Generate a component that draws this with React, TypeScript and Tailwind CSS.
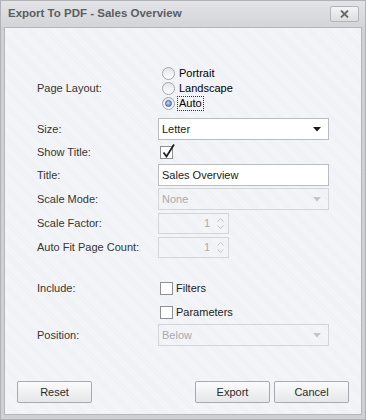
import React, { useState } from "react";

const font = "font-['Liberation_Sans',Arial,sans-serif]";

const Radio = ({ checked, label, focused }: { checked?: boolean; label: string; focused?: boolean }) => (
  <div className="flex items-center h-[15px]">
    <span className="relative w-[13px] h-[13px] rounded-full border border-[#a3a6ab] bg-[linear-gradient(180deg,#e2e4e8,#ffffff)] flex items-center justify-center">
      {checked && (
        <span className="w-[7px] h-[7px] rounded-full bg-[radial-gradient(circle_at_40%_35%,#c5d8f5,#4a72b8)] border border-[#3e65a6]" />
      )}
    </span>
    <span
      className={`ml-[3px] leading-[13px] px-[1px] ${focused ? "outline outline-1 outline-dotted outline-[#333]" : ""}`}
    >
      {label}
    </span>
  </div>
);

const Check = ({ checked }: { checked?: boolean }) => (
  <span className="relative w-[13px] h-[13px] border border-[#8d8f93] bg-white block">
    {checked && (
      <svg className="absolute left-[1px] top-[-4px]" width="14" height="16" viewBox="0 0 14 16">
        <path d="M1.5 9.5 L4.5 13.5 L12 1.5" fill="none" stroke="#1e1e1e" strokeWidth="1.8" />
      </svg>
    )}
  </span>
);

const Combo = ({ value, disabled }: { value: string; disabled?: boolean }) => (
  <div
    className={`w-[171px] h-[22px] border flex items-center justify-between pl-[3px] pr-[7px] ${
      disabled ? "border-[#d3d5d9] text-[#a9abaf]" : "border-[#b9bcc1] bg-white text-[#222]"
    }`}
  >
    <span>{value}</span>
    <svg width="8" height="5" viewBox="0 0 8 5">
      <path d="M0 0 L8 0 L4 4.5 Z" fill={disabled ? "#c4c6ca" : "#1a1a1a"} />
    </svg>
  </div>
);

const Spin = () => (
  <div className="w-[71px] h-[21px] border border-[#d3d5d9] flex items-center justify-end pr-[4px] text-[#a9abaf]">
    <span className="mr-[7px]">1</span>
    <div className="flex flex-col gap-[3px]">
      <svg width="7" height="4" viewBox="0 0 7 4">
        <path d="M0.5 3.5 L3.5 0.5 L6.5 3.5" fill="none" stroke="#c2c4c8" strokeWidth="1" />
      </svg>
      <svg width="7" height="4" viewBox="0 0 7 4">
        <path d="M0.5 0.5 L3.5 3.5 L6.5 0.5" fill="none" stroke="#c2c4c8" strokeWidth="1" />
      </svg>
    </div>
  </div>
);

const Btn = ({ label }: { label: string }) => (
  <button className="w-[75px] h-[22px] border border-[#a7aaae] rounded-[2px] bg-[linear-gradient(180deg,#fbfbfc,#e6e7e9)] text-[#2a2a2a] text-[11px]">
    {label}
  </button>
);

const Row = ({ label, className, children }: { label?: string; className: string; children?: React.ReactNode }) => (
  <div className={`flex items-center ${className}`}>
    <div className="w-[121px] text-[#353535]">{label}</div>
    <div className="flex-1">{children}</div>
  </div>
);

const App: React.FC = () => {
  const [title] = useState("Sales Overview");

  return (
    <div className={`w-[366px] h-[420px] bg-[#cfd0d4] border border-[#b0b2b6] flex flex-col text-[11px] ${font}`}>
      <div className="h-[26px] flex items-center justify-between pl-[7px] pr-[6px] bg-[linear-gradient(180deg,#e3e4e7,#d3d4d8)]">
        <span className="font-bold text-[11.5px] text-[#5c5d60]">Export To PDF - Sales Overview</span>
        <div className="w-[29px] h-[16px] border border-[#b3b5b9] rounded-[2px] bg-[linear-gradient(180deg,#f4f4f5,#dcdddf)] flex items-center justify-center">
          <svg width="9" height="8" viewBox="0 0 9 8">
            <path d="M1 0.5 L8 7.5 M8 0.5 L1 7.5" stroke="#66676a" strokeWidth="1.8" />
          </svg>
        </div>
      </div>
      <div className="flex-1 mx-[3px] mb-[4px] border border-[#b4b6ba] bg-[#f3f4f7] bg-[repeating-linear-gradient(45deg,#f5f6f9_0px,#f5f6f9_1px,#eff0f3_1px,#eff0f3_2px)] pl-[32px] pt-[38px]">
        <Row label="Page Layout:" className="h-[45px]">
          <div className="pl-[4px]">
            <Radio label="Portrait" />
            <Radio label="Landscape" />
            <Radio label="Auto" checked focused />
          </div>
        </Row>
        <Row label="Size:" className="h-[22px] mt-[7px]">
          <Combo value="Letter" />
        </Row>
        <Row label="Show Title:" className="h-[24px]">
          <div className="pl-[2px]">
            <Check checked />
          </div>
        </Row>
        <Row label="Title:" className="h-[22px]">
          <div className="w-[171px] h-[22px] border border-[#b9bcc1] bg-white flex items-center pl-[3px] text-[#222]">
            {title}
          </div>
        </Row>
        <Row label="Scale Mode:" className="h-[22px] mt-[2px]">
          <Combo value="None" disabled />
        </Row>
        <Row label="Scale Factor:" className="h-[21px] mt-[3px]">
          <Spin />
        </Row>
        <Row label="Auto Fit Page Count:" className="h-[21px] mt-[3px]">
          <Spin />
        </Row>
        <Row label="Include:" className="h-[24px] mt-[18px]">
          <div className="flex items-center pl-[2px] gap-[3px] text-[#222]">
            <Check />
            <span>Filters</span>
          </div>
        </Row>
        <Row className="h-[24px]">
          <div className="flex items-center pl-[2px] gap-[3px] text-[#222]">
            <Check />
            <span>Parameters</span>
          </div>
        </Row>
        <Row label="Position:" className="h-[22px]">
          <Combo value="Below" disabled />
        </Row>
        <div className="flex items-center mt-[35px] -ml-[20px] pr-[12px]">
          <Btn label="Reset" />
          <div className="flex-1" />
          <Btn label="Export" />
          <div className="w-[4px]" />
          <Btn label="Cancel" />
        </div>
      </div>
    </div>
  );
};

export default App;
